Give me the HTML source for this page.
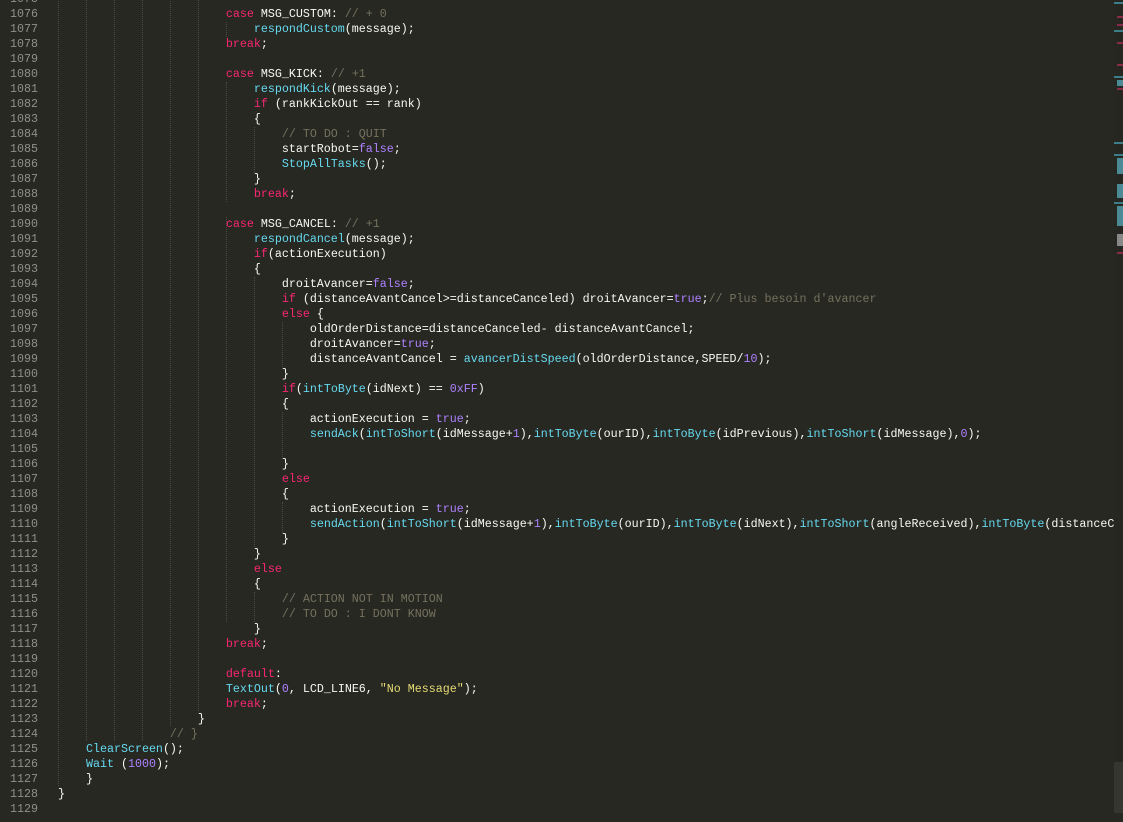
<!DOCTYPE html>
<html><head><meta charset="utf-8"><style>
html,body{margin:0;padding:0;background:#272822;width:1123px;height:813px;overflow:hidden}
#ed{position:absolute;left:0;top:-8.5px;width:1114px;height:830px;overflow:hidden}
.l{height:15px;line-height:15px;white-space:pre;font-family:"Liberation Mono",monospace;font-size:11.67px;color:#f8f8f2;position:relative}
.n{position:absolute;left:10px;color:#8f908a;width:40px}
.c{position:absolute;left:58px}
.k{color:#f92672}.f{color:#66d9ef}.p{color:#ae81ff}.m{color:#75715e}.s{color:#e6db74}
.g{position:absolute;width:0;border-left:1px dotted #4a4b44}
#mm{position:absolute;left:1114px;top:0;width:9px;height:813px;background:#262721}
#mm div{position:absolute;height:2px}
</style></head><body>
<div id="ed">
<div class="g" style="left:58px;top:0;height:794px"></div>
<div class="g" style="left:86px;top:0;height:749px"></div>
<div class="g" style="left:114px;top:0;height:749px"></div>
<div class="g" style="left:142px;top:0;height:749px"></div>
<div class="g" style="left:170px;top:0;height:734px"></div>
<div class="g" style="left:198px;top:0;height:719px"></div>
<div class="g" style="left:226px;top:30px;height:15px"></div>
<div class="g" style="left:226px;top:90px;height:120px"></div>
<div class="g" style="left:226px;top:225px;height:405px"></div>
<div class="g" style="left:254px;top:135px;height:45px"></div>
<div class="g" style="left:254px;top:285px;height:270px"></div>
<div class="g" style="left:254px;top:600px;height:30px"></div>
<div class="g" style="left:282px;top:330px;height:45px"></div>
<div class="g" style="left:282px;top:420px;height:45px"></div>
<div class="g" style="left:282px;top:510px;height:30px"></div>
<div class="l"><span class="n">1075</span></div>
<div class="l"><span class="n">1076</span><span class="c">                        <span class="k">case</span> MSG_CUSTOM: <span class="m">// + 0</span></span></div>
<div class="l"><span class="n">1077</span><span class="c">                            <span class="f">respondCustom</span>(message);</span></div>
<div class="l"><span class="n">1078</span><span class="c">                        <span class="k">break</span>;</span></div>
<div class="l"><span class="n">1079</span></div>
<div class="l"><span class="n">1080</span><span class="c">                        <span class="k">case</span> MSG_KICK: <span class="m">// +1</span></span></div>
<div class="l"><span class="n">1081</span><span class="c">                            <span class="f">respondKick</span>(message);</span></div>
<div class="l"><span class="n">1082</span><span class="c">                            <span class="k">if</span> (rankKickOut == rank)</span></div>
<div class="l"><span class="n">1083</span><span class="c">                            {</span></div>
<div class="l"><span class="n">1084</span><span class="c">                                <span class="m">// TO DO : QUIT</span></span></div>
<div class="l"><span class="n">1085</span><span class="c">                                startRobot=<span class="p">false</span>;</span></div>
<div class="l"><span class="n">1086</span><span class="c">                                <span class="f">StopAllTasks</span>();</span></div>
<div class="l"><span class="n">1087</span><span class="c">                            }</span></div>
<div class="l"><span class="n">1088</span><span class="c">                            <span class="k">break</span>;</span></div>
<div class="l"><span class="n">1089</span></div>
<div class="l"><span class="n">1090</span><span class="c">                        <span class="k">case</span> MSG_CANCEL: <span class="m">// +1</span></span></div>
<div class="l"><span class="n">1091</span><span class="c">                            <span class="f">respondCancel</span>(message);</span></div>
<div class="l"><span class="n">1092</span><span class="c">                            <span class="k">if</span>(actionExecution)</span></div>
<div class="l"><span class="n">1093</span><span class="c">                            {</span></div>
<div class="l"><span class="n">1094</span><span class="c">                                droitAvancer=<span class="p">false</span>;</span></div>
<div class="l"><span class="n">1095</span><span class="c">                                <span class="k">if</span> (distanceAvantCancel&gt;=distanceCanceled) droitAvancer=<span class="p">true</span>;<span class="m">// Plus besoin d'avancer</span></span></div>
<div class="l"><span class="n">1096</span><span class="c">                                <span class="k">else</span> {</span></div>
<div class="l"><span class="n">1097</span><span class="c">                                    oldOrderDistance=distanceCanceled- distanceAvantCancel;</span></div>
<div class="l"><span class="n">1098</span><span class="c">                                    droitAvancer=<span class="p">true</span>;</span></div>
<div class="l"><span class="n">1099</span><span class="c">                                    distanceAvantCancel = <span class="f">avancerDistSpeed</span>(oldOrderDistance,SPEED/<span class="p">10</span>);</span></div>
<div class="l"><span class="n">1100</span><span class="c">                                }</span></div>
<div class="l"><span class="n">1101</span><span class="c">                                <span class="k">if</span>(<span class="f">intToByte</span>(idNext) == <span class="p">0xFF</span>)</span></div>
<div class="l"><span class="n">1102</span><span class="c">                                {</span></div>
<div class="l"><span class="n">1103</span><span class="c">                                    actionExecution = <span class="p">true</span>;</span></div>
<div class="l"><span class="n">1104</span><span class="c">                                    <span class="f">sendAck</span>(<span class="f">intToShort</span>(idMessage+<span class="p">1</span>),<span class="f">intToByte</span>(ourID),<span class="f">intToByte</span>(idPrevious),<span class="f">intToShort</span>(idMessage),<span class="p">0</span>);</span></div>
<div class="l"><span class="n">1105</span></div>
<div class="l"><span class="n">1106</span><span class="c">                                }</span></div>
<div class="l"><span class="n">1107</span><span class="c">                                <span class="k">else</span></span></div>
<div class="l"><span class="n">1108</span><span class="c">                                {</span></div>
<div class="l"><span class="n">1109</span><span class="c">                                    actionExecution = <span class="p">true</span>;</span></div>
<div class="l"><span class="n">1110</span><span class="c">                                    <span class="f">sendAction</span>(<span class="f">intToShort</span>(idMessage+<span class="p">1</span>),<span class="f">intToByte</span>(ourID),<span class="f">intToByte</span>(idNext),<span class="f">intToShort</span>(angleReceived),<span class="f">intToByte</span>(distanceCanceled));</span></div>
<div class="l"><span class="n">1111</span><span class="c">                                }</span></div>
<div class="l"><span class="n">1112</span><span class="c">                            }</span></div>
<div class="l"><span class="n">1113</span><span class="c">                            <span class="k">else</span></span></div>
<div class="l"><span class="n">1114</span><span class="c">                            {</span></div>
<div class="l"><span class="n">1115</span><span class="c">                                <span class="m">// ACTION NOT IN MOTION</span></span></div>
<div class="l"><span class="n">1116</span><span class="c">                                <span class="m">// TO DO : I DONT KNOW</span></span></div>
<div class="l"><span class="n">1117</span><span class="c">                            }</span></div>
<div class="l"><span class="n">1118</span><span class="c">                        <span class="k">break</span>;</span></div>
<div class="l"><span class="n">1119</span></div>
<div class="l"><span class="n">1120</span><span class="c">                        <span class="k">default</span>:</span></div>
<div class="l"><span class="n">1121</span><span class="c">                        <span class="f">TextOut</span>(<span class="p">0</span>, LCD_LINE6, <span class="s">"No Message"</span>);</span></div>
<div class="l"><span class="n">1122</span><span class="c">                        <span class="k">break</span>;</span></div>
<div class="l"><span class="n">1123</span><span class="c">                    }</span></div>
<div class="l"><span class="n">1124</span><span class="c">                <span class="m">// }</span></span></div>
<div class="l"><span class="n">1125</span><span class="c">    <span class="f">ClearScreen</span>();</span></div>
<div class="l"><span class="n">1126</span><span class="c">    <span class="f">Wait</span> (<span class="p">1000</span>);</span></div>
<div class="l"><span class="n">1127</span><span class="c">    }</span></div>
<div class="l"><span class="n">1128</span><span class="c">}</span></div>
<div class="l"><span class="n">1129</span></div>
</div>
<div id="mm">
<div style="left:0;top:2px;width:9px;background:#3c7d8a"></div>
<div style="left:3px;top:16px;width:6px;background:#8a2a4a"></div>
<div style="left:3px;top:24px;width:6px;background:#8a2a4a"></div>
<div style="left:0;top:30px;width:9px;background:#3c7d8a"></div>
<div style="left:3px;top:42px;width:6px;background:#8a2a4a"></div>
<div style="left:3px;top:64px;width:6px;background:#8a2a4a"></div>
<div style="left:0;top:76px;width:9px;background:#3c7d8a"></div>
<div style="left:3px;top:80px;width:6px;height:6px;background:#4a8a96"></div>
<div style="left:3px;top:88px;width:6px;background:#8a2a4a"></div>
<div style="left:0;top:142px;width:9px;background:#3c7d8a"></div>
<div style="left:0;top:154px;width:9px;background:#3c7d8a"></div>
<div style="left:3px;top:158px;width:6px;height:16px;background:#4a8a96"></div>
<div style="left:3px;top:184px;width:6px;height:14px;background:#4a8a96"></div>
<div style="left:0;top:202px;width:9px;background:#3c7d8a"></div>
<div style="left:3px;top:206px;width:6px;height:20px;background:#4a8a96"></div>
<div style="left:3px;top:234px;width:6px;height:12px;background:#888"></div>
<div style="left:3px;top:252px;width:6px;background:#8a2a4a"></div>
<div style="left:0;top:762px;width:9px;height:51px;background:#35362f"></div>
</div>
</body></html>
